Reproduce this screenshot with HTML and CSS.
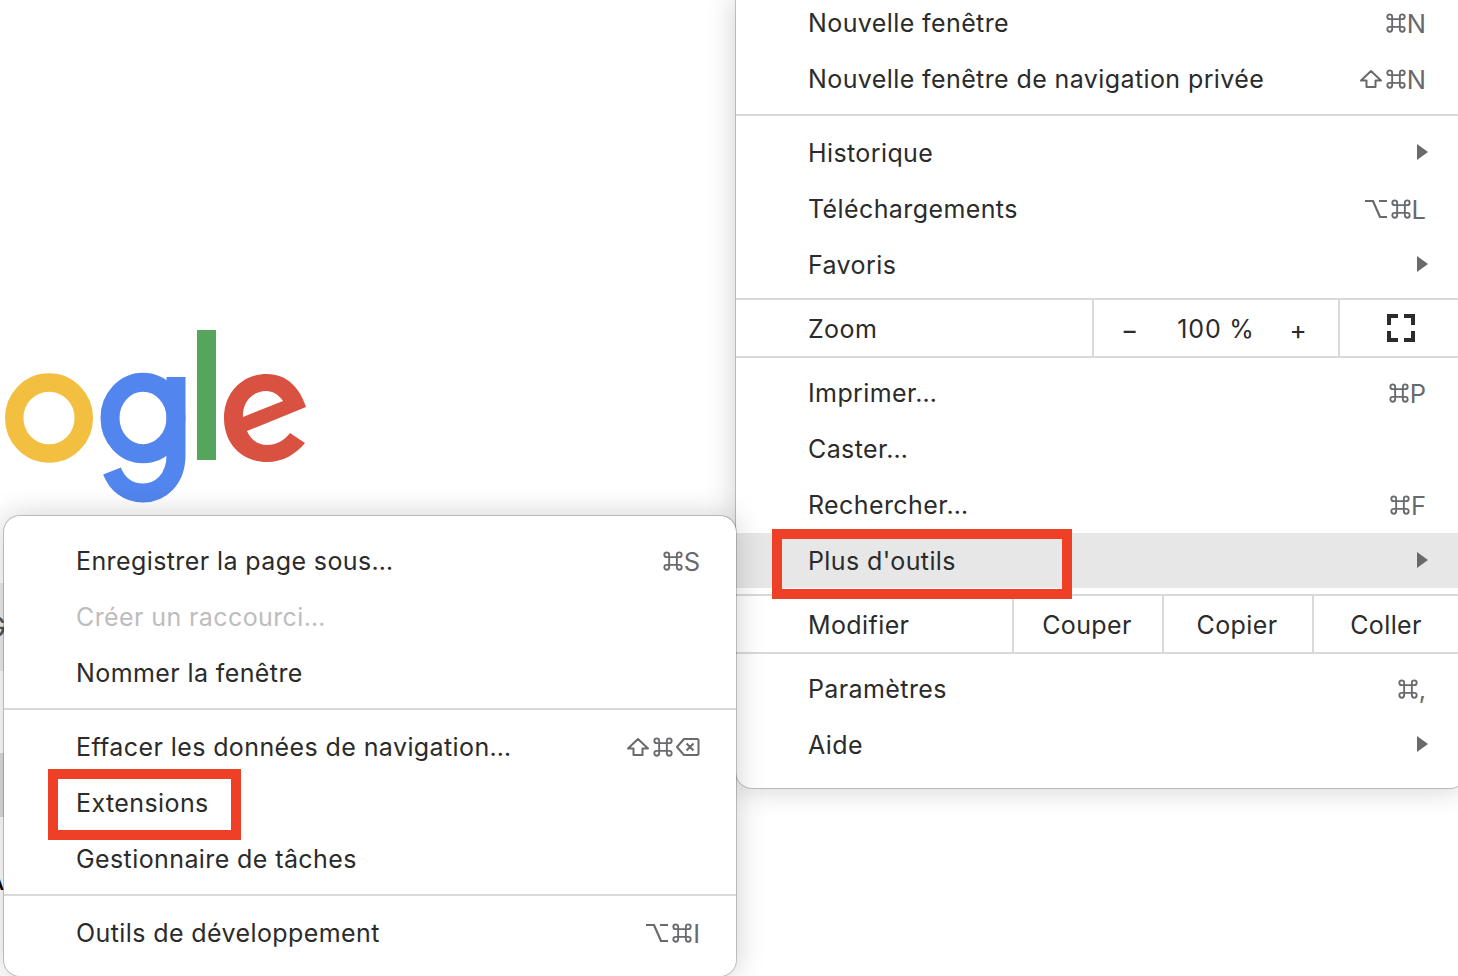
FILE: index.html
```html
<!DOCTYPE html>
<html lang="fr">
<head>
<meta charset="utf-8">
<title>Chrome</title>
<link rel="stylesheet" href="styles.css">
</head>
<body>
<svg class="defs" width="0" height="0" aria-hidden="true">
  <symbol id="cmd" viewBox="0 0 20 20"><path d="M6.500 6.500h7v7h-7zM6.500 6.500H4.300a2.200 2.200 0 1 1 2.200-2.200zM13.500 6.500V4.300a2.200 2.200 0 1 1 2.200 2.200zM13.500 13.500h2.200a2.200 2.200 0 1 1-2.200 2.200zM6.500 13.500v2.200a2.200 2.200 0 1 1-2.200-2.200z" fill="none" stroke="currentColor" stroke-width="1.700"/></symbol>
  <symbol id="shift" viewBox="0 0 24 20"><path d="M12 2 2 11.500h5.500V18h9v-6.500H22z" fill="none" stroke="currentColor" stroke-width="2" stroke-linejoin="round"/></symbol>
  <symbol id="opt" viewBox="0 0 24 20"><path d="M1 2h8l7 16h7M15 2h8" fill="none" stroke="currentColor" stroke-width="2.200"/></symbol>
  <symbol id="del" viewBox="0 0 24 20"><path d="M8 2h13a1.500 1.500 0 0 1 1.500 1.500v13A1.500 1.500 0 0 1 21 18H8l-7-8zM10.500 6.500l7 7M17.500 6.500l-7 7" fill="none" stroke="currentColor" stroke-width="2" stroke-linejoin="round"/></symbol>
</svg>

<div class="logo" aria-label="Google logo">
  <svg width="320" height="190" viewBox="0 0 320 190">
    <ellipse class="o" cx="49" cy="88" rx="34.800" ry="35.500"/>
    <g class="g-letter">
      <ellipse cx="143" cy="88" rx="33" ry="35.700"/>
      <path d="M176 47V125C176 150 160 163 143 163C128 163 117 154 112 141"/>
    </g>
    <rect class="l" x="197" y="0" width="19" height="130"/>
    <path class="e" fill-rule="evenodd" d="M306 77C300 58 287 44 267 44C242 44 224 63 224 88C224 114 242 132 267 132C283 132 296 124 305 113L290 103C284 111 276 115 267 115C258 115 251 110 247 101ZM243 87C242 73 252 61 266 61C273 61 279 65 283 71Z"/>
  </svg>
</div>

<div class="band band-1"></div>
<div class="band band-2"></div>
<div class="peek peek-g">G</div>
<div class="peek peek-a">A</div>

<nav class="menu menu-main">
  <div class="row"><span>Nouvelle fenêtre</span><span class="keys"><svg class="k"><use href="#cmd"/></svg>N</span></div>
  <div class="row"><span>Nouvelle fenêtre de navigation privée</span><span class="keys"><svg class="k k-wide"><use href="#shift"/></svg><svg class="k"><use href="#cmd"/></svg>N</span></div>
  <hr class="sep">
  <div class="row"><span>Historique</span><i class="arrow"></i></div>
  <div class="row"><span>Téléchargements</span><span class="keys"><svg class="k k-wide"><use href="#opt"/></svg><svg class="k"><use href="#cmd"/></svg>L</span></div>
  <div class="row"><span>Favoris</span><i class="arrow"></i></div>
  <hr class="sep sep-above-zoom">
  <div class="row row-cells">
    <span class="cell-label zoom-label">Zoom</span>
    <div class="cell zoom-ctl"><span class="pm">−</span><span class="zoom-value">100 %</span><span class="pm">+</span></div>
    <div class="cell full">
      <svg width="28" height="28" viewBox="0 0 28 28"><path d="M2 11V2H11M17 2H26V11M26 17V26H17M11 26H2V17" fill="none" stroke="#2b2b2b" stroke-width="4"/></svg>
    </div>
  </div>
  <hr class="sep sep-below-cells">
  <div class="row"><span>Imprimer…</span><span class="keys"><svg class="k"><use href="#cmd"/></svg>P</span></div>
  <div class="row"><span>Caster…</span></div>
  <div class="row"><span>Rechercher…</span><span class="keys"><svg class="k"><use href="#cmd"/></svg>F</span></div>
  <div class="row row-active"><span>Plus d'outils</span><i class="arrow"></i></div>
  <hr class="sep sep-edit">
  <div class="row row-cells">
    <span class="cell-label edit-label">Modifier</span>
    <div class="cell edit">Couper</div>
    <div class="cell edit">Copier</div>
    <div class="cell edit edit-last">Coller</div>
  </div>
  <hr class="sep sep-below-cells">
  <div class="row"><span>Paramètres</span><span class="keys"><svg class="k"><use href="#cmd"/></svg>,</span></div>
  <div class="row"><span>Aide</span><i class="arrow"></i></div>
</nav>

<nav class="menu menu-sub">
  <div class="row"><span>Enregistrer la page sous…</span><span class="keys"><svg class="k"><use href="#cmd"/></svg>S</span></div>
  <div class="row row-off"><span>Créer un raccourci…</span></div>
  <div class="row"><span>Nommer la fenêtre</span></div>
  <hr class="sep">
  <div class="row"><span>Effacer les données de navigation…</span><span class="keys"><svg class="k k-wide"><use href="#shift"/></svg><svg class="k"><use href="#cmd"/></svg><svg class="k k-wide"><use href="#del"/></svg></span></div>
  <div class="row"><span>Extensions</span></div>
  <div class="row"><span>Gestionnaire de tâches</span></div>
  <hr class="sep">
  <div class="row"><span>Outils de développement</span><span class="keys"><svg class="k k-wide"><use href="#opt"/></svg><svg class="k"><use href="#cmd"/></svg>I</span></div>
</nav>

<div class="callout callout-tools"></div>
<div class="callout callout-ext"></div>
</body>
</html>
```
FILE: styles.css
```css
* { box-sizing: border-box; }
html, body { margin: 0; height: 100%; overflow: hidden; background: #fff; }
body { position: relative; width: 1458px; height: 976px; font-family: Inter, "Liberation Sans", sans-serif; font-size: 25px; color: #2b2b2b; }
.defs { position: absolute; }

.logo { position: absolute; left: 0; top: 330px; }
.logo svg { display: block; }
.o { fill: none; stroke: #f3bf41; stroke-width: 18.500; }
.g-letter { fill: none; stroke: #5285ed; stroke-width: 19; }
.l { fill: #56a55c; }
.e { fill: #d95140; }

.band { position: absolute; left: 0; width: 4px; }
.band-1 { top: 583px; height: 88px; background: #ededed; }
.band-2 { top: 753px; height: 64px; background: #dcdee1; }
.peek { position: absolute; font-size: 28px; line-height: 34px; color: #555; }
.peek-g { top: 610px; left: -15px; }
.peek-a { top: 863px; left: -15px; color: #000; }

.menu { position: absolute; background: #fff; display: flex; flex-direction: column; box-shadow: 0 0 30px rgba(0,0,0,.2), 0 0 0 1px rgba(0,0,0,.2); }
.menu-main { left: 736px; top: -5px; width: 730px; height: 793px; border-radius: 0 0 16px 16px; }
.menu-sub { left: 4px; top: 516px; width: 732px; height: 460px; padding-top: 17px; border-radius: 16px; }

.row { flex: none; height: 56px; display: flex; align-items: center; justify-content: space-between; padding: 0 40px 0 72px; white-space: nowrap; letter-spacing: .4px; }
.menu-sub .row { padding-right: 36px; }
.row-off { color: #bdbdbd; }
.row-active { background: #e7e7e7; height: 55px; }

.sep { flex: none; width: 100%; height: 2px; margin: 7px 0 9px; border: 0; background: #d9d9d9; }
.menu-main .sep-above-zoom { margin: 5px 0 0; }
.menu-main .sep-below-cells { margin: 0 0 7px; }
.menu-main .sep-edit { margin: 6px 0 0; }

.keys { display: flex; align-items: center; color: #686a6e; font-size: 25.500px; letter-spacing: 0; }
.k { width: 22px; height: 22px; flex: none; }
.k-wide { width: 24px; margin-right: 2px; }
.k-wide:last-child { margin: 0 0 0 2px; }

.arrow { width: 0; height: 0; border-left: 11px solid #6a6a6a; border-top: 8px solid transparent; border-bottom: 8px solid transparent; margin: -2px -2px 0 0; }

.row.row-cells { padding: 0; justify-content: flex-start; }
.cell-label { padding: 2px 0 0 72px; flex: none; }
.zoom-label { width: 356px; }
.edit-label { width: 276px; }
.cell { flex: none; height: 100%; padding-top: 2px; border-left: 2px solid #d9d9d9; display: flex; align-items: center; justify-content: center; }
.zoom-ctl { width: 246px; justify-content: space-between; padding: 2px 31px 0 27px; }
.zoom-value { margin-left: 4px; letter-spacing: .8px; }
.pm { font-size: 26px; }
.full { width: 120px; padding: 0 0 0 3px; }
.edit { width: 150px; padding-right: 2px; }
.edit-last { width: 146px; padding-right: 0; }

.callout { position: absolute; border: 10px solid #ee4026; }
.callout-tools { left: 772px; top: 529px; width: 300px; height: 70px; }
.callout-ext { left: 48px; top: 769px; width: 193px; height: 71px; }
```
